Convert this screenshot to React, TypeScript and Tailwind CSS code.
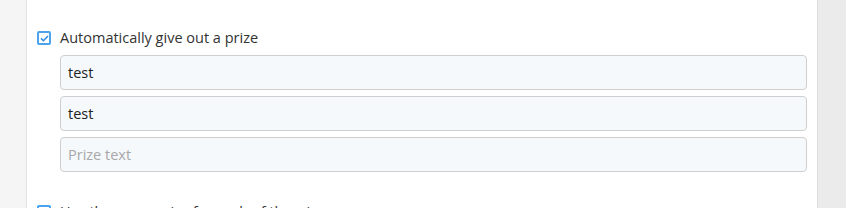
import React from "react";

function CheckBox() {
  return (
    <span className="flex h-[14px] w-[14px] shrink-0 items-center justify-center rounded-[2px] border-2 border-[#4aa3ec] bg-white">
      <svg width="9" height="9" viewBox="0 0 9 9" fill="none">
        <path d="M1 4.4 L3.4 6.7 L8 1.9" stroke="#2b8ae2" strokeWidth="1.5" />
      </svg>
    </span>
  );
}

function Field({ value, placeholder }: { value?: string; placeholder?: string }) {
  return (
    <input
      readOnly
      defaultValue={value}
      placeholder={placeholder}
      className="h-[35px] w-full rounded-[4px] border border-[#cfcfcf] bg-[#f5f9fc] px-[7px] text-[14.5px] text-[#222] outline-none placeholder:text-[#a8a8a8]"
      style={{ fontFamily: "'Open Sans', sans-serif" }}
    />
  );
}

export default function App() {
  return (
    <div
      className="flex h-[208px] w-[846px] overflow-hidden bg-[#ebebeb]"
      style={{ fontFamily: "'Open Sans', sans-serif" }}
    >
      <div className="w-[27px] shrink-0 border-r border-[#e3e3e3] bg-[#f5f5f5]" />
      <div className="flex w-[791px] shrink-0 flex-col border-r border-[#dcdcdc] bg-white pl-[10px] pr-[10px] pt-[28px]">
        <label className="flex h-[20px] items-center gap-[9px]">
          <CheckBox />
          <span className="text-[14.5px] leading-[20px] text-[#333]">Automatically give out a prize</span>
        </label>
        <div className="mt-[7px] flex flex-col gap-[6px] pl-[23px]">
          <Field value="test" />
          <Field value="test" />
          <Field placeholder="Prize text" />
        </div>
        <label className="mt-[30px] flex h-[20px] items-center gap-[9px]">
          <CheckBox />
          <span className="text-[14.5px] leading-[20px] text-[#333]">Use the same prize for each of the winners</span>
        </label>
      </div>
      <div className="flex-1" />
    </div>
  );
}
